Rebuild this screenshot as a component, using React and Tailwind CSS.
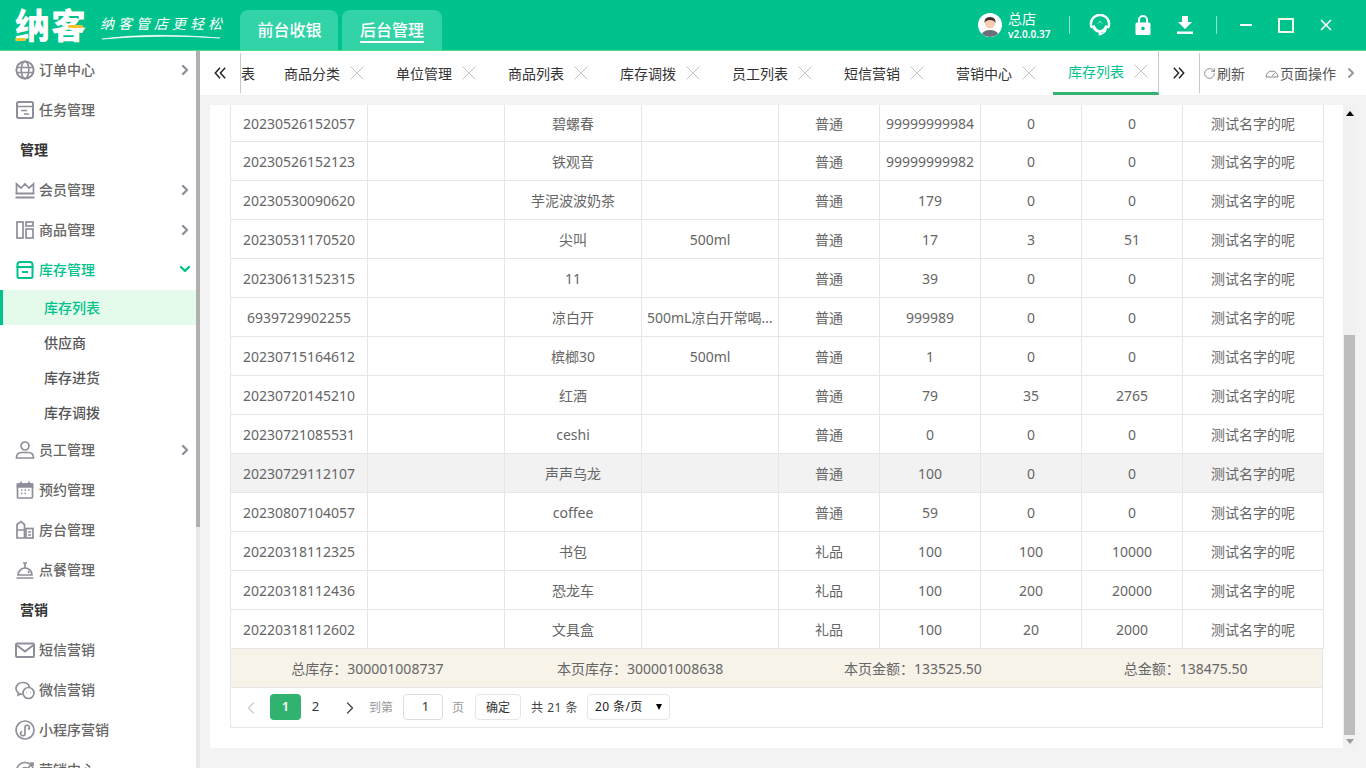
import React from 'react';
import { ChevronRight, ChevronDown, ChevronLeft, X, RotateCw } from 'lucide-react';

const ic = { fill: 'none', stroke: 'currentColor', strokeWidth: 1.7, viewBox: '0 0 20 20', className: 'w-5 h-5' };

const icons = {
  globe: <svg {...ic}><circle cx="10" cy="10" r="8.6" strokeWidth="2" /><ellipse cx="10" cy="10" rx="3.8" ry="8.6" /><path d="M1.5 7.5h17M1.5 12.5h17" /></svg>,
  task: <svg {...ic}><rect x="2" y="2" width="16" height="16" rx="1.5" strokeWidth="2" /><path d="M2 6.5h16M6 10.5h6M9 14h5" /></svg>,
  crown: <svg {...ic}><path d="M1.5 13V4l4.5 4 4-4 4 4 4.5-4v9" /><path d="M0.5 13.5h19M0.5 17.5h19" strokeWidth="2" /></svg>,
  goods: <svg {...ic}><rect x="2" y="2" width="6" height="16" /><rect x="11" y="2" width="7" height="4" /><rect x="11" y="9" width="7" height="9" /></svg>,
  store: <svg {...ic} strokeWidth="2"><path d="M2.5 7V4.5Q2.5 2 5 2h10q2.500 0 2.500 2.500V7" /><path d="M1.500 7h17" /><path d="M2.500 7v9.500q0 1.500 1.500 1.500h12q1.500 0 1.500-1.500V7M7 12h6" /></svg>,
  user: <svg {...ic}><circle cx="10" cy="6" r="4" /><path d="M1.500 18q0-5.500 5-5.500h7q5 0 5 5.500z" /></svg>,
  calendar: <svg {...ic}><rect x="2.500" y="4" width="15" height="14" rx="1" /><path d="M2.500 4h15v3h-15zM6 1.500V4M14 1.500V4" fill="currentColor" /><path d="M6 10h1.500M9.500 10H11M13 10h1.500M6 13.500h1.500M9.500 13.500H11" /></svg>,
  room: <svg {...ic}><path d="M2 18V4.500L6 1.500l3.500 3V18zM2 10h7.500" /><rect x="11" y="8.500" width="7" height="9.500" /><path d="M13 12h3M13 15h3" /></svg>,
  bell: <svg {...ic}><path d="M3 15a7 7 0 0 1 14 0zM8 3h4M10 3v5M1.500 18h17" /><path d="M13 11q1 1 1 2" /></svg>,
  mail: <svg {...ic} strokeWidth="2"><rect x="1" y="3.500" width="18" height="13.500" rx="1" /><path d="M1.500 5l8.500 6.500L18.500 5" /></svg>,
  wechat: <svg {...ic}><path d="M8 2.500C4 2.500 1 5 1 8.500q0 2.500 2.500 4.500L3 15l2.500-1q1 .3 2 .3" /><path d="M8 2.500c3.500 0 6 2 6.500 5" /><circle cx="13.500" cy="13" r="5.500" /><path d="M11.500 12.500h.5M15 12.500h.5" /></svg>,
  mini: <svg {...ic}><circle cx="10" cy="10" r="9" /><path d="M7 11.500a2.200 2.200 0 1 0 3 2V7.500a2.200 2.200 0 1 1 3 2" /></svg>,
  center: <svg {...ic}><circle cx="10" cy="11" r="8.500" /><circle cx="10" cy="11" r="3.500" /><path d="M10 11l8-8M15 3h3v3" /></svg>,
};

const menuTop = [
  { type: 'item', icon: 'globe', label: '订单中心', arrow: true },
  { type: 'item', icon: 'task', label: '任务管理' },
  { type: 'title', label: '管理' },
  { type: 'item', icon: 'crown', label: '会员管理', arrow: true },
  { type: 'item', icon: 'goods', label: '商品管理', arrow: true },
];
const menuBottom = [
  { type: 'item', icon: 'user', label: '员工管理', arrow: true },
  { type: 'item', icon: 'calendar', label: '预约管理' },
  { type: 'item', icon: 'room', label: '房台管理' },
  { type: 'item', icon: 'bell', label: '点餐管理' },
  { type: 'title', label: '营销' },
  { type: 'item', icon: 'mail', label: '短信营销' },
  { type: 'item', icon: 'wechat', label: '微信营销' },
  { type: 'item', icon: 'mini', label: '小程序营销' },
  { type: 'item', icon: 'center', label: '营销中心' },
];
const subMenu = ['库存列表', '供应商', '库存进货', '库存调拨'];
const tabs = ['商品分类', '单位管理', '商品列表', '库存调拨', '员工列表', '短信营销', '营销中心'];

const rows = [
  ['20230526152057', '碧螺春', '', '普通', '99999999984', '0', '0'],
  ['20230526152123', '铁观音', '', '普通', '99999999982', '0', '0'],
  ['20230530090620', '芋泥波波奶茶', '', '普通', '179', '0', '0'],
  ['20230531170520', '尖叫', '500ml', '普通', '17', '3', '51'],
  ['20230613152315', '11', '', '普通', '39', '0', '0'],
  ['6939729902255', '凉白开', '500mL凉白开常喝凉白开', '普通', '999989', '0', '0'],
  ['20230715164612', '槟榔30', '500ml', '普通', '1', '0', '0'],
  ['20230720145210', '红酒', '', '普通', '79', '35', '2765'],
  ['20230721085531', 'ceshi', '', '普通', '0', '0', '0'],
  ['20230729112107', '声声乌龙', '', '普通', '100', '0', '0'],
  ['20230807104057', 'coffee', '', '普通', '59', '0', '0'],
  ['20220318112325', '书包', '', '礼品', '100', '100', '10000'],
  ['20220318112436', '恐龙车', '', '礼品', '100', '200', '20000'],
  ['20220318112602', '文具盒', '', '礼品', '100', '20', '2000'],
];

function DoubleChevron({ right }) {
  return (
    <svg className="w-3 h-3 text-[#222]" viewBox="0 0 14 14" fill="none" stroke="currentColor" strokeWidth="1.700">
      {right ? <path d="M1 1l5.500 6L1 13M7 1l5.500 6L7 13" /> : <path d="M13 1L7.500 7 13 13M7 1L1.500 7 7 13" />}
    </svg>
  );
}

function MenuRow({ item }) {
  if (item.type === 'title') {
    return <div className="h-10 pl-5 pb-[2px] flex items-center text-[14px] font-bold text-[#333]">{item.label}</div>;
  }
  return (
    <div className="h-10 pl-[15px] pr-[3px] flex items-center text-[14px] font-medium text-[#666]">
      <span className="w-5 h-5 text-[#8f8f9b] shrink-0">{icons[item.icon]}</span>
      <span className="ml-1 mb-[2px] flex-1">{item.label}</span>
      {item.arrow && <ChevronRight className="w-4 h-4 text-[#8f8f9b]" strokeWidth={3.500} />}
    </div>
  );
}

function Sidebar() {
  return (
    <div className="w-[200px] shrink-0 flex overflow-hidden bg-white">
      <div className="w-[196px] shrink-0 -mt-px">
        {menuTop.map((m) => <MenuRow key={m.label} item={m} />)}
        <div className="h-10 pl-[15px] pr-[3px] flex items-center text-[14px] font-medium text-[#00c28c]">
          <span className="w-5 h-5 shrink-0">{icons.store}</span>
          <span className="ml-1 mb-[2px] flex-1">库存管理</span>
          <ChevronDown className="w-4 h-4 mb-[2px]" strokeWidth={3.500} />
        </div>
        {subMenu.map((s, i) => (
          <div
            key={s}
            className={
              i === 0
                ? 'h-[35px] pl-[41px] flex items-center text-[14px] font-medium text-[#00c28c] bg-[#e4fbec] border-l-[3px] border-[#00c28c]'
                : 'h-[35px] pl-[44px] flex items-center text-[14px] font-medium text-[#555]'
            }
          >
            {s}
          </div>
        ))}
        {menuBottom.map((m) => <MenuRow key={m.label} item={m} />)}
      </div>
      <div className="w-1 bg-[#e8e8e8] shrink-0">
        <div className="h-[476px] bg-[#b0b0b0]"></div>
      </div>
    </div>
  );
}

function Header() {
  return (
    <div className="h-[51px] shrink-0 bg-[#00c28c] border-b border-[#4fdc8a] flex items-end text-white">
      <div className="w-[240px] h-[50px] shrink-0 pl-[15px] flex items-center">
        <span className="relative text-[35px] font-black leading-none tracking-[1px]">
          纳客
          <span className="absolute left-0 bottom-[2px] w-[11px] h-[3px] bg-[#f4c430] rounded"></span>
          <span className="absolute right-[4px] top-[17px] w-[15px] h-[3px] bg-[#f4c430] rounded"></span>
        </span>
        <span className="relative ml-[13px] text-[14px] tracking-[4px] italic leading-none -mt-[2px] whitespace-nowrap">
          纳客管店更轻松
          <svg className="absolute left-0 top-[15px] w-[122px] h-[8px]" viewBox="0 0 122 8" fill="none">
            <path d="M2 7Q50 0 120 6Q60 2 2 7z" fill="#fff" stroke="#fff" strokeWidth=".6" />
          </svg>
        </span>
      </div>
      <div className="w-[98px] h-10 pl-px rounded-t-lg bg-[#33d3a8] flex items-center justify-center text-[16px] font-medium shrink-0">前台收银</div>
      <div className="w-[100px] h-10 ml-1 rounded-t-lg bg-[#33d3a8] flex items-center justify-center text-[16px] font-medium shrink-0">
        <span className="border-b-2 border-white leading-[22px] mt-[2px]">后台管理</span>
      </div>
      <div className="flex-1"></div>
      <div className="h-[50px] flex items-center shrink-0">
        <svg className="w-6 h-6" viewBox="0 0 24 24">
          <circle cx="12" cy="12" r="12" fill="#fff" />
          <circle cx="12" cy="10.500" r="5" fill="#f6cdb0" />
          <path d="M6.500 10Q6 4 12 4t5.500 6Q16 7 12 7t-5.500 3z" fill="#3a2f2a" />
          <path d="M4 21q2-4 8-4t8 4q-3.500 3-8 3t-8-3z" fill="#6b6f78" />
        </svg>
        <div className="ml-[6px] w-[61px] flex flex-col">
          <span className="text-[14px] leading-[18px]">总店</span>
          <span className="text-[10px] font-semibold leading-[13px]">v2.0.0.37</span>
        </div>
        <span className="w-px h-[18px] bg-[#8ee3c9]"></span>
        <svg className="w-[22px] h-[22px] ml-[19px]" viewBox="0 0 22 22" fill="none">
          <path d="M3 14A9 9 0 1 1 19 14" stroke="#fff" strokeWidth="2.500" />
          <path d="M3 12q5-1 8-5 3 4 8 5-1 6-8 7-7-1-8-7z" fill="#fff" />
          <path d="M6 10q3 0 5-2 2 2 5 2v2q-2 4-5 4t-5-4z" fill="#00c28c" />
          <path d="M17 16q-2 4-6 4" stroke="#fff" strokeWidth="1.500" />
          <circle cx="11" cy="20" r="1.500" fill="#fff" />
        </svg>
        <svg className="w-[16px] h-[20px] ml-[24px]" viewBox="0 0 16 20" fill="none">
          <path d="M4 8V5a4 4 0 0 1 8 0v3" stroke="#fff" strokeWidth="2" />
          <rect x="0.500" y="7.500" width="15" height="12.500" rx="1.500" fill="#fff" />
          <circle cx="8" cy="13.500" r="1.800" fill="#00c28c" />
        </svg>
        <svg className="w-[18px] h-[18px] ml-[25px]" viewBox="0 0 18 18" fill="#fff">
          <path d="M6 0h6v6h4l-7 7-7-7h4zM1 15.500h16V18H1z" />
        </svg>
        <span className="w-px h-[18px] bg-[#8ee3c9] ml-[22px]"></span>
        <span className="w-3 h-[2px] bg-white ml-[23px]"></span>
        <span className="w-4 h-[15px] border-2 border-[#f2f7e8] ml-[26px]"></span>
        <X className="w-[18px] h-[18px] ml-[23px] mr-[31px]" strokeWidth={2.200} />
      </div>
    </div>
  );
}

function TabBar() {
  return (
    <div className="h-11 bg-white flex text-[14px] text-[#333] shrink-0">
      <div className="w-[41px] flex items-center justify-center border-r border-[#c8c8c8] my-[2px]">
        <DoubleChevron />
      </div>
      <div className="w-[28px] pt-[13px] leading-[20px] shrink-0">表</div>
      {tabs.map((t) => (
        <div key={t} className="w-[106px] mr-[6px] pl-[15px] flex items-center shrink-0">
          <span>{t}</span>
          <X className="w-6 h-6 ml-[5px] text-[#c4c4c4]" strokeWidth={1} />
        </div>
      ))}
      <div className="w-[106px] pl-[15px] flex items-center shrink-0 border-r border-[#c8c8c8] border-b-[3px] border-b-[#31b36f] text-[#00c28c] -mt-px">
        <span>库存列表</span>
        <X className="w-6 h-6 ml-[5px] text-[#c4c4c4]" strokeWidth={1} />
      </div>
      <div className="w-[41px] flex items-center justify-center border-r border-[#c8c8c8] my-[2px] shrink-0">
        <DoubleChevron right />
      </div>
      <div className="pl-[3px] flex items-center text-[#555] shrink-0">
        <RotateCw className="w-[13px] h-[13px] text-[#777]" strokeWidth={1.500} />
        <span className="ml-px">刷新</span>
        <svg className="w-[14px] h-[14px] ml-5 text-[#888]" viewBox="0 0 14 14" fill="none" stroke="currentColor">
          <path d="M1 11a6 6 0 1 1 12 0zM7 10l3-3" />
        </svg>
        <span className="ml-px">页面操作</span>
        <ChevronRight className="w-4 h-4 ml-[7px] text-[#999]" strokeWidth={3} />
      </div>
    </div>
  );
}

function StockTable() {
  return (
    <table className="w-[1093px] table-fixed border-collapse text-[14px] text-[#666] text-center">
      <colgroup>
        <col className="w-[137px]" />
        <col className="w-[137px]" />
        <col className="w-[137px]" />
        <col className="w-[137px]" />
        <col className="w-[101px]" />
        <col className="w-[101px]" />
        <col className="w-[101px]" />
        <col className="w-[101px]" />
        <col className="w-[141px]" />
      </colgroup>
      <tbody>
        {rows.map((r, i) => (
          <tr key={r[0]} className={(i === 0 ? 'h-[36px] ' : 'h-[39px] ') + (r[0] === '20230729112107' ? 'bg-[#f2f2f2]' : '')}>
            <td className="border border-[#e6e6e6] border-t-0 pt-[2px]">{r[0]}</td>
            <td className="border border-[#e6e6e6] border-t-0 pt-[2px]"></td>
            <td className="border border-[#e6e6e6] border-t-0 pt-[2px]">{r[1]}</td>
            <td className="border border-[#e6e6e6] border-t-0 pt-[2px] px-[5px] truncate">{r[2]}</td>
            <td className="border border-[#e6e6e6] border-t-0 pt-[2px]">{r[3]}</td>
            <td className="border border-[#e6e6e6] border-t-0 pt-[2px]">{r[4]}</td>
            <td className="border border-[#e6e6e6] border-t-0 pt-[2px]">{r[5]}</td>
            <td className="border border-[#e6e6e6] border-t-0 pt-[2px]">{r[6]}</td>
            <td className="border border-[#e6e6e6] border-t-0 pt-[2px]">测试名字的呢</td>
          </tr>
        ))}
      </tbody>
    </table>
  );
}

function Pagination() {
  return (
    <div className="h-10 w-[1093px] pl-[10px] pt-[2px] flex items-center border border-t-0 border-[#e6e6e6] text-[13px] text-[#666]">
      <ChevronLeft className="w-5 h-5 text-[#ccc]" strokeWidth={1.500} />
      <span className="ml-[9px] w-[31px] h-[26px] -mt-[2px] rounded-sm bg-[#31b36f] text-white flex items-center justify-center font-semibold">1</span>
      <span className="w-[29px] text-center text-[#333] -mt-[2px]">2</span>
      <ChevronRight className="w-5 h-5 ml-[10px] text-[#444]" strokeWidth={1.500} />
      <span className="ml-[9px] text-[#999] text-[12px]">到第</span>
      <span className="ml-[10px] w-10 h-[26px] -mt-[2px] pl-[5px] border border-[#ddd] rounded-sm flex items-center justify-center text-[#333]">1</span>
      <span className="ml-[9px] text-[#999] text-[12px]">页</span>
      <span className="ml-[11px] w-[46px] h-[26px] -mt-[2px] pt-[2px] border border-[#e6e6e6] rounded-sm flex items-center justify-center text-[12px] text-[#333]">确定</span>
      <span className="ml-[10px] text-[12px] text-[#444] tracking-[.5px]">共 21 条</span>
      <span className="ml-[9px] w-[83px] h-[26px] -mt-[2px] border border-[#e6e6e6] rounded-sm flex items-center justify-between pl-[7px] pr-[7px] text-[12px] text-[#222] tracking-[.4px]">
        20 条/页
        <span className="w-0 h-0 border-x-[3px] border-x-transparent border-t-[6px] border-t-black"></span>
      </span>
    </div>
  );
}

export default function App() {
  return (
    <div className="w-[1366px] h-[768px] overflow-hidden flex flex-col bg-[#f3f3f3] font-['Noto_Sans','Noto_Sans_CJK_SC',sans-serif]">
      <Header />
      <div className="flex flex-1 min-h-0">
        <Sidebar />
        <div className="flex-1 min-w-0 flex flex-col">
          <TabBar />
          <div className="mt-[10px] ml-[10px] mr-[10px] mb-5 flex-1 min-h-0 bg-white flex">
            <div className="ml-5 w-[1093px] shrink-0">
              <StockTable />
              <div className="w-[1093px] h-[39px] pt-[2px] grid grid-cols-4 items-center text-center text-[14px] text-[#666] bg-[#f7f3e9] border border-t-0 border-[#e6e6e6]">
                <span>总库存：300001008737</span>
                <span>本页库存：300001008638</span>
                <span>本页金额：133525.50</span>
                <span>总金额：138475.50</span>
              </div>
              <Pagination />
            </div>
            <div className="ml-5 w-[13px] shrink-0 bg-[#f1f1f1] flex flex-col items-center">
              <div className="h-[17px] flex items-center justify-center">
                <span className="w-0 h-0 border-x-4 border-x-transparent border-b-[5px] border-b-black"></span>
              </div>
              <div className="flex-1"></div>
              <div className="w-[11px] h-[400px] bg-[#bdbdbd]"></div>
              <div className="h-[13px] flex items-center justify-center">
                <span className="w-0 h-0 border-x-4 border-x-transparent border-t-[5px] border-t-[#999]"></span>
              </div>
            </div>
          </div>
        </div>
      </div>
    </div>
  );
}
